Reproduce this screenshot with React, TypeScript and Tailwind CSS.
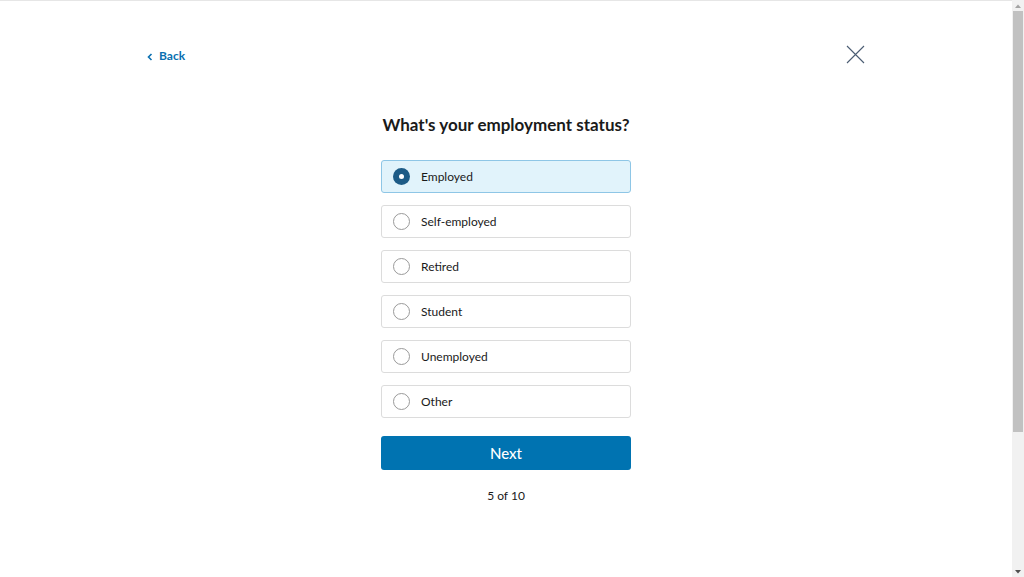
import React, { useState } from "react";

const options = ["Employed", "Self-employed", "Retired", "Student", "Unemployed", "Other"];

export default function App() {
  const [sel, setSel] = useState(0);
  return (
    <div
      className="h-[577px] overflow-hidden flex bg-white text-[#1a1a1a]"
      style={{ fontFamily: 'Lato, "Noto Sans", sans-serif' }}
    >
      <main className="flex-1 border-t border-[#e6e6e6]">
        <div className="mx-auto w-[718px] pt-[44px] flex items-center justify-between">
          <button className="flex items-center gap-[6px] text-[12px] font-bold text-[#0a6fb0] h-[22px]">
            <svg width="6" height="8" viewBox="0 0 6 8" className="mt-[1px]">
              <path d="M4.5 1 L1.5 4 L4.5 7" fill="none" stroke="#0a6fb0" strokeWidth="1.6" />
            </svg>
            Back
          </button>
          <svg width="19" height="19" viewBox="0 0 19 19" className="-mt-[3px]">
            <path d="M1 1 L18 18 M18 1 L1 18" stroke="#4b5d73" strokeWidth="1.1" />
          </svg>
        </div>
        <div className="mx-auto w-[250px] flex flex-col items-stretch">
          <h1 className="mt-[46px] text-center text-[17px] font-bold leading-[24px] whitespace-nowrap -mx-[20px] text-[#1a1a1a]">
            What's your employment status?
          </h1>
          <div className="mt-[23px] flex flex-col gap-[12px]">
            {options.map((o, i) => (
              <button
                key={o}
                onClick={() => setSel(i)}
                className={
                  "h-[33px] flex items-center rounded-[3px] border px-[11px] text-left " +
                  (i === sel ? "bg-[#e1f3fb] border-[#8ec6e6]" : "bg-white border-[#dcdcdc]")
                }
              >
                {i === sel ? (
                  <span className="w-[17px] h-[17px] rounded-full bg-[#1d5b86] flex items-center justify-center">
                    <span className="w-[5px] h-[5px] rounded-full bg-white" />
                  </span>
                ) : (
                  <span className="w-[17px] h-[17px] rounded-full border border-[#9a9a9a] bg-white" />
                )}
                <span className="ml-[11px] text-[12px] text-[#1a1a1a]">{o}</span>
              </button>
            ))}
          </div>
          <button className="mt-[18px] h-[34px] rounded-[3px] bg-[#0073b1] text-white text-[15px] font-medium">
            Next
          </button>
          <div className="mt-[17px] text-center text-[12px] text-[#1a1a1a]">5 of 10</div>
        </div>
      </main>
      <div className="w-[12px] bg-[#f1f1f1] flex flex-col items-stretch">
        <div className="h-[11px] flex items-center justify-center">
          <svg width="6" height="4" viewBox="0 0 6 4">
            <path d="M0 4 L3 0.5 L6 4 Z" fill="#a3a3a3" />
          </svg>
        </div>
        <div className="mx-[1px] h-[421px] bg-[#c1c1c1]" />
        <div className="flex-1" />
        <div className="h-[11px] flex items-center justify-center">
          <svg width="6" height="4" viewBox="0 0 6 4">
            <path d="M0 0 L3 3.5 L6 0 Z" fill="#505050" />
          </svg>
        </div>
      </div>
    </div>
  );
}
